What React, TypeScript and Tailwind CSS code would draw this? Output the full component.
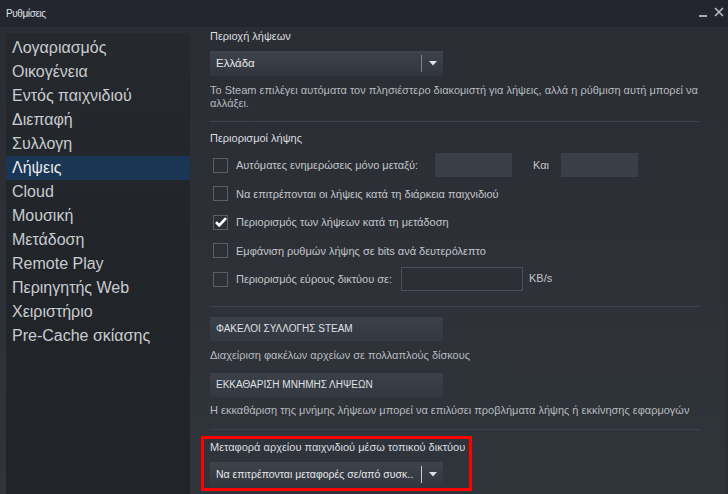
import type { ReactNode } from 'react';

const navItems = [
  'Λογαριασμός',
  'Οικογένεια',
  'Εντός παιχνιδιού',
  'Διεπαφή',
  'Συλλογη',
  'Λήψεις',
  'Cloud',
  'Μουσική',
  'Μετάδοση',
  'Remote Play',
  'Περιηγητής Web',
  'Χειριστήριο',
  'Pre-Cache σκίασης',
];

function Arrow() {
  return (
    <svg width="8" height="5" viewBox="0 0 8 5" className="shrink-0">
      <path d="M0 0h8L4 4.5z" fill="#dfe1e3" />
    </svg>
  );
}

function Dropdown({
  label,
  size = 'text-[11.5px]',
  sepColor = '#7d8187',
}: {
  label: string;
  size?: string;
  sepColor?: string;
}) {
  return (
    <div className="flex h-[25px] w-[233px] items-center bg-gradient-to-b from-[#3e434c] to-[#31353d] pl-[6px] pr-[6px]">
      <span className={`min-w-0 flex-1 whitespace-nowrap text-[#e6e8ea] ${size}`}>{label}</span>
      <div className="ml-[1px] mr-[7px] h-[17px] w-px shrink-0" style={{ background: sepColor }} />
      <Arrow />
    </div>
  );
}

function Check({ checked }: { checked?: boolean }) {
  return (
    <div className="flex h-[15px] w-[15px] shrink-0 items-center justify-center border border-[#5a5e65]">
      {checked && (
        <svg width="12" height="10" viewBox="0 0 12 10">
          <path d="M1 5.2l3.2 3.3L11 1.2" stroke="#ffffff" strokeWidth="2.6" fill="none" />
        </svg>
      )}
    </div>
  );
}

function CheckRow({ checked, children }: { checked?: boolean; children: ReactNode }) {
  return (
    <div className="flex h-[28.5px] items-center pl-[3px]">
      <Check checked={checked} />
      <div className="ml-[8px] flex items-center whitespace-nowrap text-[11px] text-[#c3c6ca]">{children}</div>
    </div>
  );
}

function Separator() {
  return <div className="h-px w-[490px] bg-[#3e4149]" />;
}

function Button({ children }: { children: ReactNode }) {
  return (
    <div className="flex h-[24px] w-[233px] items-center bg-gradient-to-b from-[#3b4049] to-[#343840] pl-[6px] text-[10px] text-[#dfe1e3]">
      {children}
    </div>
  );
}

export default function App() {
  return (
    <div className="flex h-[494px] w-[728px] flex-col overflow-hidden bg-[#2a2d33] font-['Liberation_Sans',Arial,sans-serif]">
      <div className="flex h-[27px] shrink-0 items-center bg-[#23262e] pl-[6px] pr-[4px]">
        <span className="text-[10px] tracking-[-0.4px] text-[#dfe1e3]">Ρυθμίσεις</span>
        <div className="flex-1" />
        <div className="mt-[5px] h-[2px] w-[8px] bg-[#a9adb2]" />
        <svg width="10" height="10" viewBox="0 0 10 10" className="mb-[3px] ml-[7px]">
          <path d="M1 1l8 8M9 1l-8 8" stroke="#b9bdc1" strokeWidth="1.6" />
        </svg>
      </div>

      <div className="flex min-h-0 flex-1 bg-gradient-to-b from-[#2a2d33] to-[#30343b]">
        <div className="ml-[6px] mt-[6px] w-[184px] shrink-0 bg-gradient-to-b from-[#25282d] via-[#212429] to-[#212429] pt-[3px]">
          {navItems.map((item) => (
            <div
              key={item}
              className={
                item === 'Λήψεις'
                  ? 'flex h-[24px] items-center bg-[#1a3654] pl-[6px] text-[16px] text-[#e8eaec]'
                  : 'flex h-[24px] items-center pl-[6px] text-[16px] text-[#c9ccd0]'
              }
            >
              {item}
            </div>
          ))}
        </div>

        <div className="flex min-w-0 flex-1 flex-col pl-[20px] pt-[2.5px]">
          <div className="text-[11px] leading-[13px] text-[#dcdee0]">Περιοχή λήψεων</div>
          <div className="mt-[8.5px]">
            <Dropdown label="Ελλάδα" />
          </div>
          <p className="mt-[7.5px] w-[490px] text-[11px] leading-[13px] text-[#b7bbbf]">
            Το Steam επιλέγει αυτόματα τον πλησιέστερο διακομιστή για λήψεις, αλλά η ρύθμιση αυτή μπορεί να
            αλλάξει.
          </p>
          <div className="mt-[11.5px]">
            <Separator />
          </div>

          <div className="mt-[10px] text-[11px] leading-[13px] text-[#dcdee0]">Περιορισμοί λήψης</div>
          <div className="mt-[6px] flex flex-col">
            <CheckRow>
              <span className="w-[199px]">Αυτόματες ενημερώσεις μόνο μεταξύ:</span>
              <div className="h-[24px] w-[77px] bg-[#3a3e46]" />
              <span className="ml-[21px] w-[28px]">Και</span>
              <div className="h-[24px] w-[77px] bg-[#3a3e46]" />
            </CheckRow>
            <CheckRow>Να επιτρέπονται οι λήψεις κατά τη διάρκεια παιχνιδιού</CheckRow>
            <CheckRow checked>Περιορισμός των λήψεων κατά τη μετάδοση</CheckRow>
            <CheckRow>Εμφάνιση ρυθμών λήψης σε bits ανά δευτερόλεπτο</CheckRow>
            <CheckRow>
              <span className="w-[165px]">Περιορισμός εύρους δικτύου σε:</span>
              <div className="h-[24px] w-[122px] border border-[#4a4f57] bg-[#2c2f36]" />
              <span className="-mt-[3px] ml-[6px]">KB/s</span>
            </CheckRow>
          </div>

          <div className="mt-[12px]">
            <Separator />
          </div>
          <div className="mt-[10px]">
            <Button>ΦΑΚΕΛΟΙ ΣΥΛΛΟΓΗΣ STEAM</Button>
          </div>
          <div className="mt-[8.5px] text-[11px] leading-[13px] text-[#b7bbbf]">
            Διαχείριση φακέλων αρχείων σε πολλαπλούς δίσκους
          </div>
          <div className="mt-[10.5px]">
            <Button>ΕΚΚΑΘΑΡΙΣΗ ΜΝΗΜΗΣ ΛΗΨΕΩΝ</Button>
          </div>
          <div className="mt-[7.5px] text-[11px] leading-[13px] text-[#b7bbbf]">
            Η εκκαθάριση της μνήμης λήψεων μπορεί να επιλύσει προβλήματα λήψης ή εκκίνησης εφαρμογών
          </div>
          <div className="mt-[12px]">
            <Separator />
          </div>

          <div className="-ml-[9px] mt-[6px] w-[271px] border-[3px] border-[#ff0000] pb-[1px] pl-[6px]">
            <div className="pt-[2px] text-[11px] leading-[13px] text-[#dcdee0]">
              Μεταφορά αρχείου παιχνιδιού μέσω τοπικού δικτύου
            </div>
            <div className="mt-[8px]">
              <Dropdown label="Να επιτρέπονται μεταφορές σε/από συσκ.." size="text-[10.5px]" sepColor="#c9ccd0" />
            </div>
          </div>
        </div>
        <div className="w-[3px] shrink-0 bg-[#2b2e34]" />
      </div>
    </div>
  );
}
